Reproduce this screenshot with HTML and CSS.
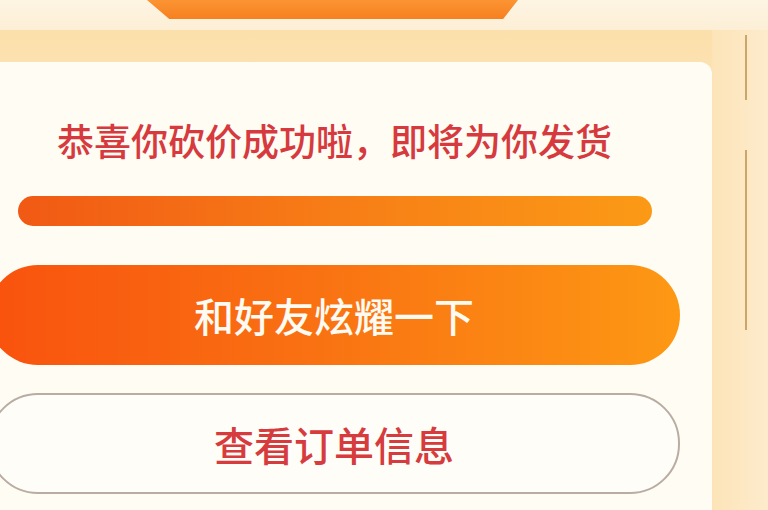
FILE: index.html
```html
<!DOCTYPE html>
<html lang="zh-CN">
<head>
  <meta charset="UTF-8">
  <meta name="viewport" content="width=device-width, initial-scale=1.0">
  <title>砍价成功</title>
  <link rel="stylesheet" href="styles.css">
</head>
<body>
  <div class="page">
    <header class="top">
      <div class="tab"></div>
    </header>
    <main class="main">
      <section class="card">
        <h2 class="card-title">恭喜你砍价成功啦，即将为你发货</h2>
        <div class="progress"><div class="progress-fill"></div></div>
        <button type="button" class="btn btn-share">和好友炫耀一下</button>
        <button type="button" class="btn btn-order">查看订单信息</button>
      </section>
      <aside class="side">
        <span class="rule rule-short"></span>
        <span class="rule rule-long"></span>
      </aside>
    </main>
  </div>
</body>
</html>
```

FILE: styles.css
```css
* {
  box-sizing: border-box;
}
html {
  font-family: 'Noto Sans CJK SC', 'Noto Sans', sans-serif;
}
body {
  margin: 0;
}
.page {
  width: 768px;
  height: 510px;
  overflow: hidden;
  background: #fdf1dc;
}
.top {
  height: 30px;
  background: linear-gradient(#fdf4e3, #fdefd6);
}
.tab {
  width: 371px;
  height: 19px;
  margin-left: 147px;
  background: linear-gradient(#fc9433, #f6801f);
  clip-path: polygon(0 0, 100% 0, 96% 100%, 6% 100%);
}
.main {
  display: flex;
  height: 480px;
  background: linear-gradient(#fce0ab, #fde6bf 25%, #fdebcf 60%, #fdeedb);
}
.card {
  width: 712px;
  margin-top: 32px;
  border-radius: 0 12px 0 0;
  background: #fffcf3;
  display: flex;
  flex-direction: column;
  align-items: flex-start;
}
.card-title {
  margin: 56px 0 0 57px;
  font-size: 37px;
  line-height: 44px;
  font-weight: 500;
  color: #d63a3e;
}
.progress {
  width: 634px;
  height: 30px;
  margin: 34px 0 0 18px;
  border-radius: 15px;
  overflow: hidden;
}
.progress-fill {
  height: 100%;
  background: linear-gradient(to right, #f15914, #f77d16 50%, #fb9a16);
}
.btn {
  width: 692px;
  margin-left: -12px;
  border-radius: 50px;
  font: inherit;
  font-size: 40px;
  font-weight: 500;
  cursor: pointer;
}
.btn-share {
  height: 100px;
  margin-top: 39px;
  border: none;
  color: #fffaf2;
  background: linear-gradient(to right, #f9520e, #f97012 45%, #fd9814);
}
.btn-order {
  height: 101px;
  margin-top: 28px;
  border: 2px solid #b9aca3;
  color: #d63b3d;
  background: #fffdf8;
}
.side {
  flex: 1;
  display: flex;
  flex-direction: column;
  align-items: flex-start;
  gap: 50px;
  padding: 5px 0 0 33px;
  background: linear-gradient(to right, #fde4b8, #fdebcc);
}
.rule {
  width: 2px;
  background: #caa56c;
}
.rule-short {
  height: 65px;
}
.rule-long {
  height: 180px;
}
```
